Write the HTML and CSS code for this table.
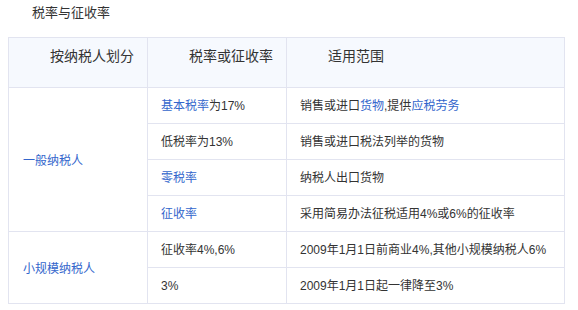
FILE: index.html
```html
<!DOCTYPE html>
<html lang="zh">
<head>
<meta charset="utf-8">
<link rel="stylesheet" href="styles.css">
</head>
<body>
<div class="title">税率与征收率</div>
<table class="tax">
  <colgroup><col class="c1"><col class="c2"><col class="c3"></colgroup>
  <thead>
    <tr><th>按纳税人划分</th><th>税率或征收率</th><th>适用范围</th></tr>
  </thead>
  <tbody>
    <tr>
      <td rowspan="4" class="kind"><a>一般纳税人</a></td>
      <td><a>基本税率</a>为17%</td>
      <td>销售或进口<a>货物</a>,提供<a>应税劳务</a></td>
    </tr>
    <tr><td>低税率为13%</td><td>销售或进口税法列举的货物</td></tr>
    <tr><td><a>零税率</a></td><td>纳税人出口货物</td></tr>
    <tr><td><a>征收率</a></td><td>采用简易办法征税适用4%或6%的征收率</td></tr>
    <tr>
      <td rowspan="2" class="kind"><a>小规模纳税人</a></td>
      <td>征收率4%,6%</td>
      <td>2009年1月1日前商业4%,其他小规模纳税人6%</td>
    </tr>
    <tr><td>3%</td><td>2009年1月1日起一律降至3%</td></tr>
  </tbody>
</table>
</body>
</html>
```
FILE: styles.css
```css
html, body {
  margin: 0;
  padding: 0;
  background: #fff;
}
body {
  font-family: "Liberation Sans", "Noto Sans CJK SC", sans-serif;
  color: #333;
}
.title {
  font-size: 13px;
  line-height: 16px;
  padding: 5px 0 0 32px;
  height: 37px;
  box-sizing: border-box;
}
.tax {
  margin-left: 8px;
  border-collapse: collapse;
  table-layout: fixed;
  width: 556px;
  font-size: 12px;
}
.c1 { width: 139px; }
.c2 { width: 139px; }
.c3 { width: 278px; }
.tax th, .tax td {
  border: 1px solid #e2e4f0;
  padding: 0;
}
.tax th {
  background: #f6f9fe;
  font-weight: normal;
  font-size: 14px;
  text-align: left;
  height: 49px;
  line-height: 18px;
  padding: 9px 0 22px 41px;
  box-sizing: border-box;
}
.tax td {
  height: 35px;
  line-height: 16px;
  padding: 0 0 0 13px;
  vertical-align: middle;
}
.tax td.kind {
  padding-left: 14px;
  padding-top: 3px;
}
.tax a {
  color: #3366cc;
  text-decoration: none;
}
```
